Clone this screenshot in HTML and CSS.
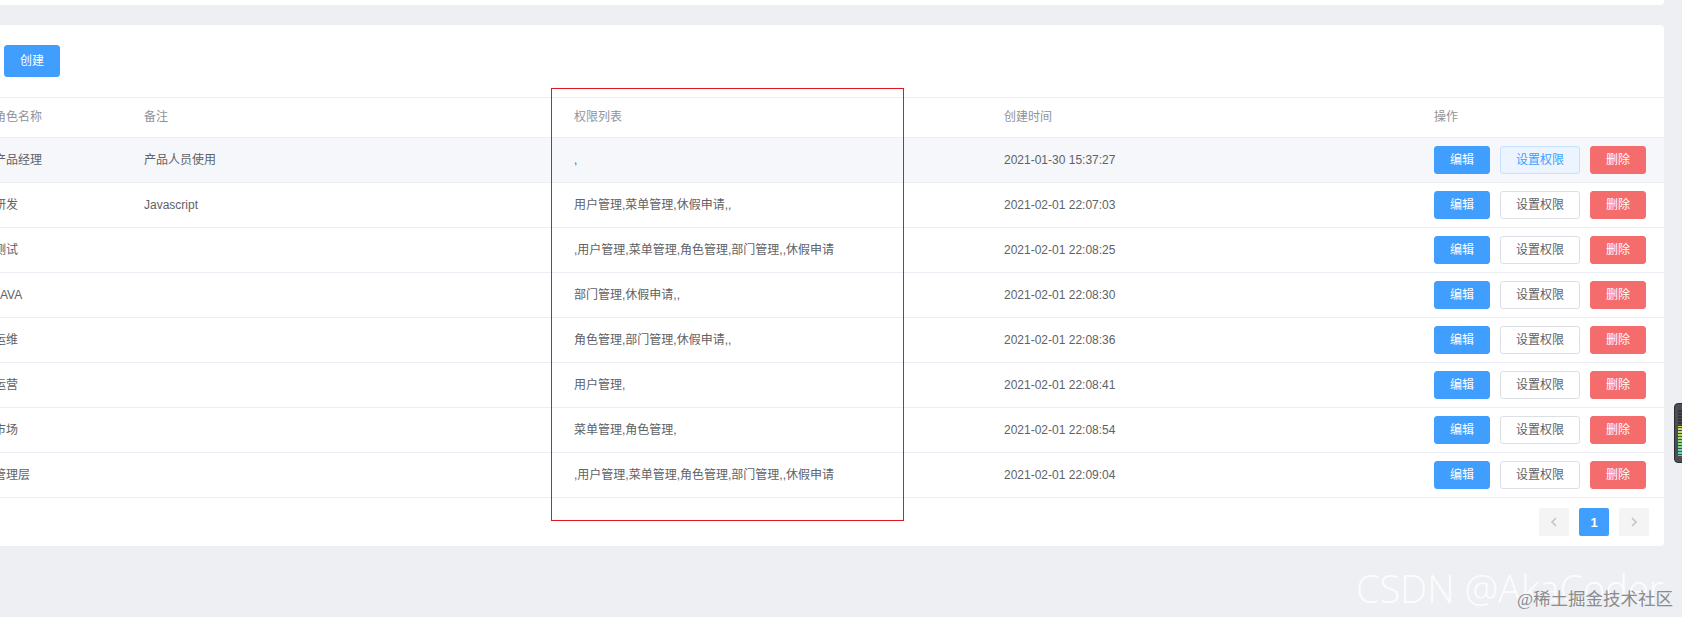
FILE: index.html
```html
<!DOCTYPE html>
<html lang="zh-CN">
<head>
  <meta charset="UTF-8" />
  <meta name="viewport" content="width=device-width, initial-scale=1.0"/>
  <title>角色管理</title>
  <link rel="stylesheet" href="styles.css">
</head>
<body>
  <div class="top-card"></div>

  <div class="card">
    <div class="toolbar">
      <button class="btn btn-primary btn-small">创建</button>
    </div>

    <table class="role-table">
      <colgroup>
        <col style="width:150px">
        <col style="width:430px">
        <col style="width:430px">
        <col style="width:430px">
        <col style="width:240px">
      </colgroup>
      <thead>
        <tr>
          <th>角色名称</th>
          <th>备注</th>
          <th>权限列表</th>
          <th>创建时间</th>
          <th>操作</th>
        </tr>
      </thead>
      <tbody>
        <tr class="hover">
          <td>产品经理</td>
          <td>产品人员使用</td>
          <td>,</td>
          <td>2021-01-30 15:37:27</td>
          <td><div class="ops"><button class="btn btn-primary">编辑</button><button class="btn is-hover">设置权限</button><button class="btn btn-danger">删除</button></div></td>
        </tr>
        <tr>
          <td>研发</td>
          <td>Javascript</td>
          <td>用户管理,菜单管理,休假申请,,</td>
          <td>2021-02-01 22:07:03</td>
          <td><div class="ops"><button class="btn btn-primary">编辑</button><button class="btn">设置权限</button><button class="btn btn-danger">删除</button></div></td>
        </tr>
        <tr>
          <td>测试</td>
          <td></td>
          <td>,用户管理,菜单管理,角色管理,部门管理,,休假申请</td>
          <td>2021-02-01 22:08:25</td>
          <td><div class="ops"><button class="btn btn-primary">编辑</button><button class="btn">设置权限</button><button class="btn btn-danger">删除</button></div></td>
        </tr>
        <tr>
          <td>JAVA</td>
          <td></td>
          <td>部门管理,休假申请,,</td>
          <td>2021-02-01 22:08:30</td>
          <td><div class="ops"><button class="btn btn-primary">编辑</button><button class="btn">设置权限</button><button class="btn btn-danger">删除</button></div></td>
        </tr>
        <tr>
          <td>运维</td>
          <td></td>
          <td>角色管理,部门管理,休假申请,,</td>
          <td>2021-02-01 22:08:36</td>
          <td><div class="ops"><button class="btn btn-primary">编辑</button><button class="btn">设置权限</button><button class="btn btn-danger">删除</button></div></td>
        </tr>
        <tr>
          <td>运营</td>
          <td></td>
          <td>用户管理,</td>
          <td>2021-02-01 22:08:41</td>
          <td><div class="ops"><button class="btn btn-primary">编辑</button><button class="btn">设置权限</button><button class="btn btn-danger">删除</button></div></td>
        </tr>
        <tr>
          <td>市场</td>
          <td></td>
          <td>菜单管理,角色管理,</td>
          <td>2021-02-01 22:08:54</td>
          <td><div class="ops"><button class="btn btn-primary">编辑</button><button class="btn">设置权限</button><button class="btn btn-danger">删除</button></div></td>
        </tr>
        <tr>
          <td>管理层</td>
          <td></td>
          <td>,用户管理,菜单管理,角色管理,部门管理,,休假申请</td>
          <td>2021-02-01 22:09:04</td>
          <td><div class="ops"><button class="btn btn-primary">编辑</button><button class="btn">设置权限</button><button class="btn btn-danger">删除</button></div></td>
        </tr>
      </tbody>
    </table>

    <div class="pager">
      <button class="pager-btn" disabled>
        <svg width="8" height="10" viewBox="0 0 8 10"><path d="M6 1 L2 5 L6 9" fill="none" stroke="currentColor" stroke-width="1.6"/></svg>
      </button>
      <button class="pager-btn active">1</button>
      <button class="pager-btn" disabled>
        <svg width="8" height="10" viewBox="0 0 8 10"><path d="M2 1 L6 5 L2 9" fill="none" stroke="currentColor" stroke-width="1.6"/></svg>
      </button>
    </div>
  </div>

  <!-- annotation box around the permission column -->
  <div class="mark-box"></div>

  <div class="watermark">CSDN @AkaCoder</div>
  <div class="watermark-sub">@稀土掘金技术社区</div>

  <div class="side-widget"><div class="side-bars"></div></div>
</body>
</html>
```

FILE: styles.css
```css
html, body {
  margin: 0;
  padding: 0;
  overflow: hidden;
}
body {
  font-family: 'Liberation Sans', 'Noto Sans CJK SC', sans-serif;
  font-size: 12px;
  background-color: #eeeff3;
  color: #606266;
  height: 617px;
  position: relative;
}
.top-card {
  height: 5px;
  width: 1680px;
  margin-left: -16px;
  background: #fff;
  border-radius: 0 0 4px 4px;
}
.card {
  margin-top: 20px;
  margin-left: -16px;
  width: 1680px;
  background: #fff;
  border-radius: 4px;
}
.toolbar {
  padding: 20px;
}
.btn {
  font-family: inherit;
  font-size: 12px;
  line-height: 1;
  padding: 7px 15px;
  border: 1px solid #dcdfe6;
  border-radius: 3px;
  background: #fff;
  color: #606266;
  cursor: pointer;
  white-space: nowrap;
}
.btn-small {
  padding: 9px 15px;
}
.btn-primary {
  background: #409eff;
  border-color: #409eff;
  color: #fff;
}
.btn-danger {
  background: #f56c6c;
  border-color: #f56c6c;
  color: #fff;
}
.btn.is-hover {
  background: #ecf5ff;
  border-color: #c6e2ff;
  color: #409eff;
}
.role-table {
  width: 1680px;
  table-layout: fixed;
  border-collapse: separate;
  border-spacing: 0;
  border-top: 1px solid #ebeef5;
}
.role-table th {
  text-align: left;
  font-weight: normal;
  color: #909399;
  padding: 9px 10px;
  line-height: 21px;
  border-bottom: 1px solid #ebeef5;
}
.role-table td {
  padding: 12px 10px;
  line-height: 20px;
  border-bottom: 1px solid #ebeef5;
  white-space: nowrap;
}
.role-table td:last-child {
  padding: 8px 10px;
}
.role-table tr.hover td {
  background: #f5f7fa;
}
.ops {
  display: flex;
  gap: 10px;
  height: 28px;
}
.pager {
  display: flex;
  justify-content: flex-end;
  gap: 10px;
  padding: 10px 15px 10px 0;
}
.pager-btn {
  width: 30px;
  height: 28px;
  border: none;
  border-radius: 2px;
  background: #f4f4f5;
  color: #c0c4cc;
  font-family: 'Liberation Sans', sans-serif;
  font-size: 13px;
  font-weight: bold;
  padding: 0;
  display: flex;
  align-items: center;
  justify-content: center;
}
.pager-btn.active {
  background: #409eff;
  color: #fff;
}
.mark-box {
  position: absolute;
  left: 551px;
  top: 88px;
  width: 351px;
  height: 431px;
  border: 1px solid #e3161f;
}
.watermark {
  position: absolute;
  left: 1356px;
  top: 562px;
  font-family: 'Open Sans', sans-serif;
  font-weight: 300;
  font-size: 38px;
  color: rgba(255, 255, 255, 0.85);
  white-space: nowrap;
}
.watermark-sub {
  position: absolute;
  left: 1517px;
  top: 591px;
  font-family: 'Liberation Serif', 'Noto Sans CJK SC', serif;
  font-size: 17.5px;
  line-height: 1;
  color: #8a8b8e;
  white-space: nowrap;
}
.side-widget {
  position: absolute;
  left: 1674px;
  top: 403px;
  width: 14px;
  height: 58px;
  background: #4b4e56;
  border: 1px solid #2b2d31;
  border-radius: 4px;
}
.side-bars {
  margin: 6px 0 0 3px;
  width: 10px;
  height: 46px;
  background:
    repeating-linear-gradient(to bottom, transparent 0 2px, #4b4e56 2px 3px),
    linear-gradient(to bottom, #33353a 0 35%, #d8d84a 35%, #9ee05a 60%, #3fe0c4 100%);
}
```
